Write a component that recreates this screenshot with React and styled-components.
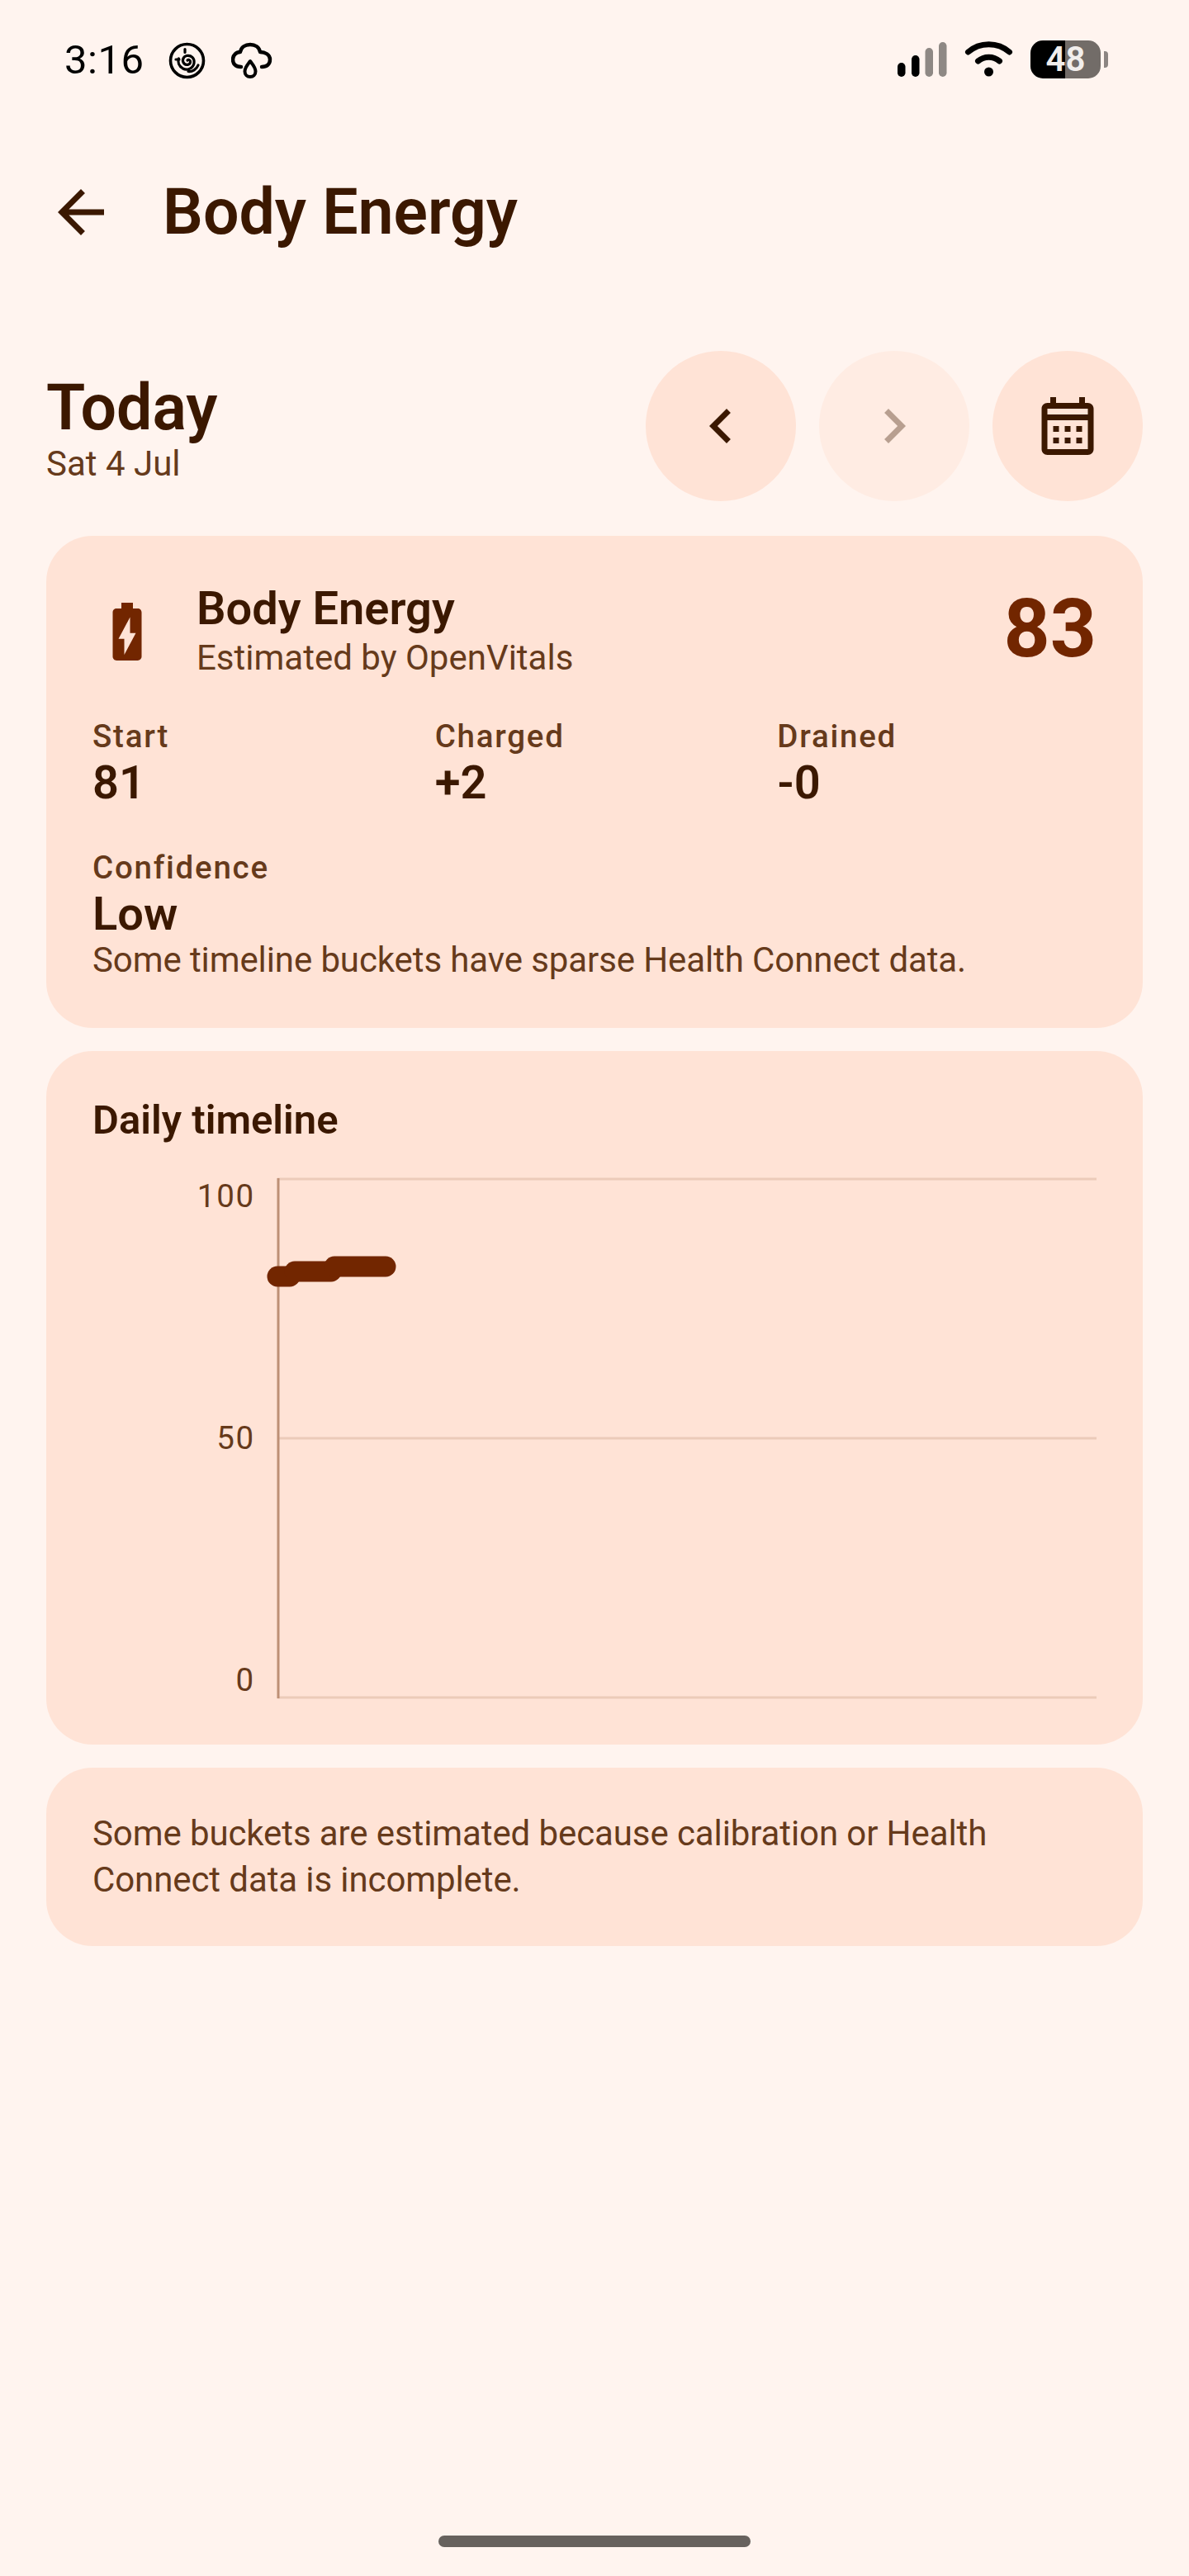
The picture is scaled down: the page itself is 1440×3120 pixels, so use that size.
import React from 'react';
import styled, { createGlobalStyle } from 'styled-components';

const ink = '#3b1800';
const soft = '#663a1b';
const rust = '#722600';
const peach = '#ffe3d6';

const GlobalStyle = createGlobalStyle`
	html,
	body {
		margin: 0;
		padding: 0;
		background: #fff4ef;
	}
	* {
		box-sizing: border-box;
	}
`;

const Page = styled.div`
	width: 1440px;
	height: 3120px;
	background: #fff4ef;
	color: ${ink};
	font-family: Roboto, 'Liberation Sans', sans-serif;
	display: flex;
	flex-direction: column;
`;

const StatusBar = styled.div`
	height: 145px;
	padding: 49px 107px 0 78px;
	display: flex;
	align-items: flex-start;
	color: #000;
`;

const Clock = styled.span`
	font-size: 49px;
	line-height: 48px;
	width: 126px;
	letter-spacing: 0.5px;
`;

const StatusLeft = styled.div`
	display: flex;
	align-items: center;
	gap: 30px;
	margin-top: 2px;
`;

const StatusRight = styled.div`
	margin-left: auto;
	display: flex;
	align-items: flex-start;
	gap: 21px;
`;

const Battery = styled.div`
	width: 85px;
	height: 46px;
	border-radius: 15px;
	background: linear-gradient(90deg, #000 0 42px, #726c68 42px);
	color: #f1eeec;
	font-size: 42px;
	font-weight: 600;
	line-height: 46px;
	text-align: center;
	position: relative;
	&::after {
		content: '';
		position: absolute;
		left: 89px;
		top: 13px;
		width: 5px;
		height: 20px;
		border-radius: 0 4px 4px 0;
		background: #8b8582;
	}
`;

const TopBar = styled.header`
	height: 140px;
	padding: 0 56px;
	margin-top: 42px;
	display: flex;
	align-items: center;
	gap: 57px;
`;

const TopTitle = styled.h1`
	margin: 0;
	font-size: 77px;
	font-weight: 600;
	line-height: 100px;
`;

const DateRow = styled.section`
	margin-top: 98px;
	height: 182px;
	padding: 0 56px;
	display: flex;
	align-items: center;
	justify-content: space-between;
`;

const DateBlock = styled.div`
	padding-top: 12px;
`;

const DateTitle = styled.div`
	font-size: 77px;
	font-weight: 600;
	line-height: 80px;
`;

const DateSub = styled.div`
	font-size: 42px;
	line-height: 56px;
	color: ${soft};
`;

const NavButtons = styled.div`
	display: flex;
	gap: 28px;
`;

const RoundButton = styled.button`
	width: 182px;
	height: 182px;
	padding: 0;
	border: none;
	border-radius: 50%;
	display: flex;
	align-items: center;
	justify-content: center;
	background: ${(props) => (props.disabled ? '#ffece3' : peach)};
	color: ${(props) => (props.disabled ? '#b89f90' : ink)};
`;

const Cards = styled.main`
	margin-top: 42px;
	padding: 0 56px;
	display: flex;
	flex-direction: column;
	gap: 28px;
`;

const Card = styled.section`
	background: ${peach};
	border-radius: 56px;
	padding: ${(props) => props.$padding || '56px'};
`;

const SummaryHead = styled.div`
	display: flex;
	align-items: center;
	gap: 42px;
	color: ${rust};
`;

const SummaryText = styled.div`
	flex: 1;
`;

const SummaryTitle = styled.div`
	font-size: 56px;
	font-weight: 600;
	line-height: 64px;
	color: ${ink};
`;

const SummarySub = styled.div`
	font-size: 42px;
	line-height: 56px;
	color: ${soft};
`;

const BigScore = styled.div`
	font-size: 98px;
	font-weight: 700;
	line-height: 110px;
	padding-bottom: 6px;
	color: ${rust};
`;

const StatGrid = styled.div`
	margin-top: 39px;
	display: grid;
	grid-template-columns: repeat(3, 1fr);
	gap: 28px;
`;

const StatLabel = styled.div`
	font-size: 38.5px;
	font-weight: 500;
	line-height: 56px;
	letter-spacing: 1.75px;
	color: ${soft};
`;

const StatValue = styled.div`
	font-size: 56px;
	font-weight: 600;
	line-height: 56px;
`;

const ConfidenceBlock = styled.div`
	margin-top: 47px;
`;

const Note = styled.p`
	margin: 0;
	font-size: 42px;
	line-height: 56px;
	letter-spacing: -0.1px;
	color: ${soft};
`;

const ChartTitle = styled.h2`
	margin: 0 0 42px;
	font-size: 49px;
	font-weight: 600;
	line-height: 56px;
`;

const ChartRow = styled.div`
	display: flex;
	gap: 27px;
	height: 630px;
`;

const YAxis = styled.div`
	width: 197px;
	display: flex;
	flex-direction: column;
	justify-content: space-between;
	text-align: right;
	font-size: 38.5px;
	line-height: 44px;
	letter-spacing: 1.75px;
	color: ${soft};
`;

const Plot = styled.svg`
	flex: 1;
	height: 630px;
	overflow: visible;
`;

const HomeBar = styled.div`
	margin: auto auto 35px;
	width: 378px;
	height: 14px;
	border-radius: 7px;
	background: #67625e;
`;

const SpiralIcon = () => (
	<svg width="46" height="46" viewBox="0 0 46 46" fill="none" stroke="currentColor" strokeWidth="3.2" strokeLinecap="round">
		<circle cx="22.5" cy="22.5" r="20" strokeWidth="3.6" />
		<path d="M23 22c1.5-1.5 4 0 3.5 2.5-.5 3-5 4-7.5 1.5-3-3-1.5-8.5 3-9.5 5.5-1 10 3 9 9-1 6-8 9.500-13.500 6.500-5-3-6.500-8-5-12" />
		<path d="M36 28c-2 5-7 8-12 7.500M9 21h4M20 8.500v4" />
	</svg>
);

const CloudDropIcon = () => (
	<svg width="50" height="46" viewBox="0 0 50 46" fill="none" stroke="currentColor" strokeWidth="4.4" strokeLinecap="round" strokeLinejoin="round">
		<path d="M12 30C5 30 2 26 2 21S6 12 11 12C12 6 17 3 23 3S34 6 35 12C41 12 47 15 47 21S43 30 37 30" />
		<path d="M23 23C20 27 16.500 30.500 16.500 35.500C16.500 39.500 19.500 42 23 42S29.500 39.500 29.500 35.500C29.500 30.500 26 27 23 23Z" strokeWidth="4" />
	</svg>
);

const SignalIcon = () => (
	<svg width="61" height="46" viewBox="0 0 61 46">
		<rect x="1" y="27" width="9.500" height="17" rx="4.700" fill="#000" />
		<rect x="18" y="18" width="9.500" height="26" rx="4.700" fill="#000" />
		<rect x="34.500" y="9" width="9.500" height="35" rx="4.700" fill="#8e8884" />
		<rect x="51" y="2" width="9.500" height="42" rx="4.700" fill="#8e8884" />
	</svg>
);

const WifiIcon = () => (
	<svg width="59" height="46" viewBox="0 0 59 46" fill="none" stroke="#000" strokeWidth="7" strokeLinecap="round">
		<path d="M4.500 14C18.500 1.500 40.500 1.500 54.500 14" />
		<path d="M16.500 25C24 18.500 35 18.500 42.500 25" />
		<ellipse cx="29.500" cy="38" rx="5.500" ry="5.500" fill="#000" stroke="none" />
	</svg>
);

const MaterialIcon = ({ d }) => (
	<svg width="84" height="84" viewBox="0 0 24 24" fill="currentColor">
		<path d={d} />
	</svg>
);

const icons = {
	back: 'M20 11H7.83l5.59-5.59L12 4l-8 8 8 8 1.41-1.41L7.83 13H20v-2z',
	prev: 'M15.41 7.41L14 6l-6 6 6 6 1.41-1.41L10.83 12z',
	next: 'M8.59 16.59L10 18l6-6-6-6-1.41 1.41L13.17 12z',
	calendar:
		'M19 4h-1V2h-2v2H8V2H6v2H5c-1.11 0-2 .9-2 2v14c0 1.1.89 2 2 2h14c1.1 0 2-.9 2-2V6c0-1.1-.9-2-2-2zm0 16H5V10h14v10zm0-12H5V6h14v2zM9 14H7v-2h2v2zm4 0h-2v-2h2v2zm4 0h-2v-2h2v2zm-8 4H7v-2h2v2zm4 0h-2v-2h2v2zm4 0h-2v-2h2v2z',
	bolt: 'M15.67 4H14V2h-4v2H8.33C7.6 4 7 4.6 7 5.33v15.33C7 21.4 7.6 22 8.33 22h7.33c.74 0 1.34-.6 1.34-1.33V5.33C17 4.6 16.4 4 15.67 4zM11 20v-5.5H9L13 7v5.5h2L11 20z',
};

const stats = [
	{ label: 'Start', value: '81' },
	{ label: 'Charged', value: '+2' },
	{ label: 'Drained', value: '-0' },
];

const Stat = ({ label, value }) => (
	<div>
		<StatLabel>{label}</StatLabel>
		<StatValue>{value}</StatValue>
	</div>
);

// chart drawn in page pixels, origin at the top left of the plot
const TimelineChart = () => (
	<Plot viewBox="0 0 992 630">
		<line x1="0" y1="1" x2="992" y2="1" stroke="#eccbb9" strokeWidth="3" />
		<line x1="0" y1="315" x2="992" y2="315" stroke="#eccbb9" strokeWidth="3" />
		<line x1="0" y1="629" x2="992" y2="629" stroke="#eccbb9" strokeWidth="3" />
		<line x1="1" y1="0" x2="1" y2="630" stroke="#bd9076" strokeWidth="3" />
		<g stroke={rust} strokeWidth="25" strokeLinecap="round">
			<line x1="0" y1="119" x2="15" y2="119" />
			<line x1="21" y1="113" x2="65" y2="113" />
			<line x1="69" y1="107" x2="131" y2="107" />
		</g>
	</Plot>
);

const App = () => (
	<Page>
		<GlobalStyle />
		<StatusBar>
			<Clock>3:16</Clock>
			<StatusLeft>
				<SpiralIcon />
				<CloudDropIcon />
			</StatusLeft>
			<StatusRight>
				<SignalIcon />
				<WifiIcon />
				<Battery>48</Battery>
			</StatusRight>
		</StatusBar>
		<TopBar>
			<MaterialIcon d={icons.back} />
			<TopTitle>Body Energy</TopTitle>
		</TopBar>
		<DateRow>
			<DateBlock>
				<DateTitle>Today</DateTitle>
				<DateSub>Sat 4 Jul</DateSub>
			</DateBlock>
			<NavButtons>
				<RoundButton aria-label="Previous day">
					<MaterialIcon d={icons.prev} />
				</RoundButton>
				<RoundButton aria-label="Next day" disabled>
					<MaterialIcon d={icons.next} />
				</RoundButton>
				<RoundButton aria-label="Pick a date">
					<MaterialIcon d={icons.calendar} />
				</RoundButton>
			</NavButtons>
		</DateRow>
		<Cards>
			<Card $padding="56px 56px 54px">
				<SummaryHead>
					<MaterialIcon d={icons.bolt} />
					<SummaryText>
						<SummaryTitle>Body Energy</SummaryTitle>
						<SummarySub>Estimated by OpenVitals</SummarySub>
					</SummaryText>
					<BigScore>83</BigScore>
				</SummaryHead>
				<StatGrid>
					{stats.map((stat) => (
						<Stat key={stat.label} {...stat} />
					))}
				</StatGrid>
				<ConfidenceBlock>
					<Stat label="Confidence" value="Low" />
					<Note>Some timeline buckets have sparse Health Connect data.</Note>
				</ConfidenceBlock>
			</Card>
			<Card>
				<ChartTitle>Daily timeline</ChartTitle>
				<ChartRow>
					<YAxis>
						<span>100</span>
						<span>50</span>
						<span>0</span>
					</YAxis>
					<TimelineChart />
				</ChartRow>
			</Card>
			<Card $padding="52px 56px">
				<Note>Some buckets are estimated because calibration or Health Connect data is incomplete.</Note>
			</Card>
		</Cards>
		<HomeBar />
	</Page>
);

export default App;
